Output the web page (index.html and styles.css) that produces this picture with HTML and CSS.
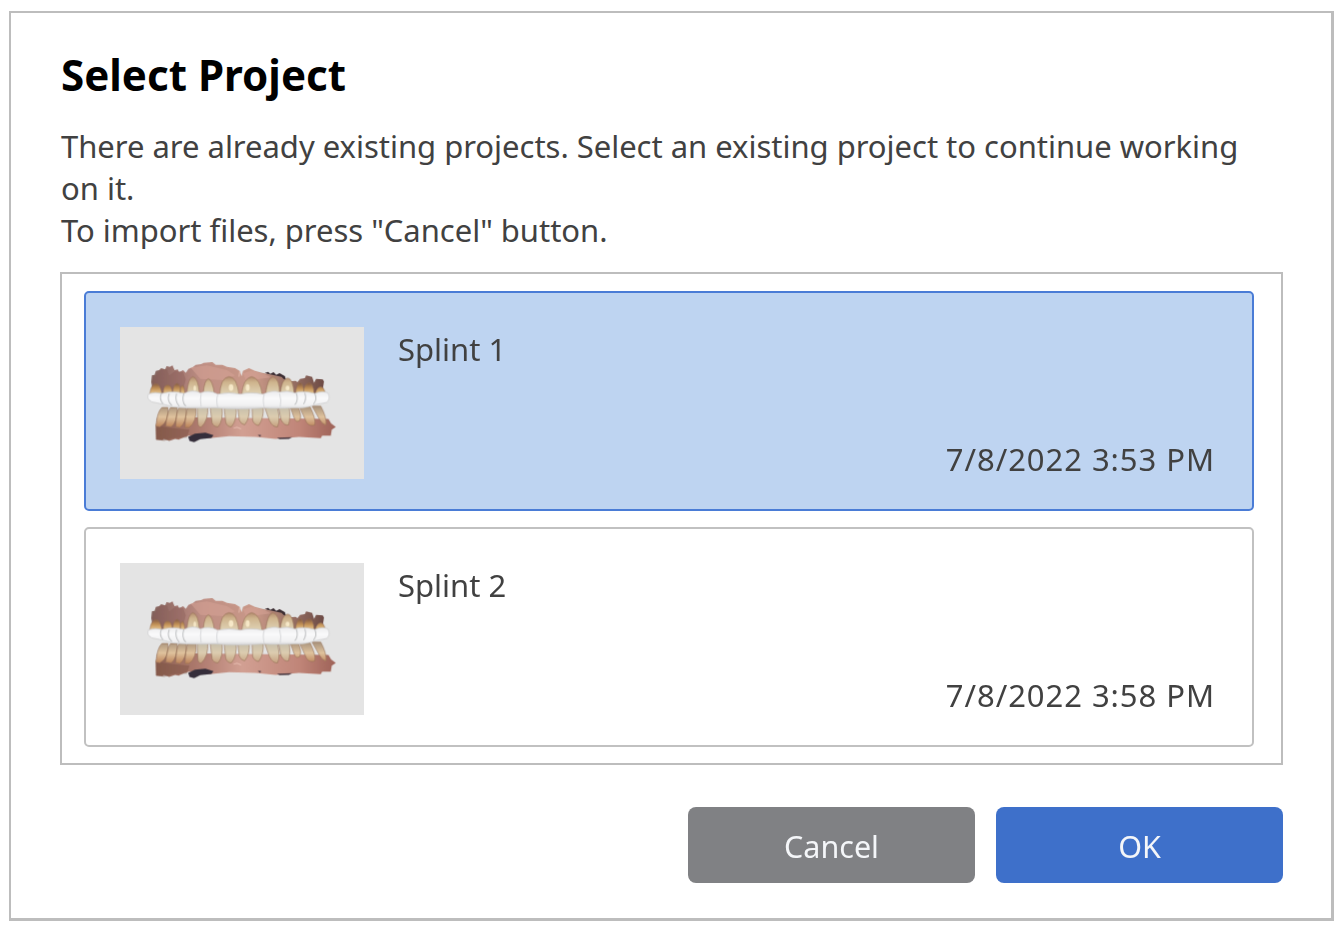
FILE: index.html
```html
<!DOCTYPE html>
<html lang="en">
<head>
<meta charset="utf-8">
<title>Select Project</title>
<link rel="stylesheet" href="styles.css">
</head>
<body>
<svg class="defs" aria-hidden="true">
  <defs>
    <linearGradient id="upperTooth" x1="0" y1="0" x2="0" y2="1"><stop offset="0" stop-color="#b58d70"/><stop offset=".3" stop-color="#cfb58e"/><stop offset="1" stop-color="#e2d6b9"/></linearGradient>
    <linearGradient id="backTooth" x1="0" y1="0" x2="0" y2="1"><stop offset="0" stop-color="#7d5340"/><stop offset=".5" stop-color="#c39258"/><stop offset="1" stop-color="#ebcd98"/></linearGradient>
    <linearGradient id="lowerTooth" x1="0" y1="0" x2="0" y2="1"><stop offset="0" stop-color="#c4bdab"/><stop offset=".5" stop-color="#dccdb0"/><stop offset="1" stop-color="#c5a07e"/></linearGradient>
    <linearGradient id="lowerBack" x1="0" y1="0" x2="0" y2="1"><stop offset="0" stop-color="#a8937c"/><stop offset=".5" stop-color="#dfc29d"/><stop offset="1" stop-color="#bb8158"/></linearGradient>
    <linearGradient id="upperGum" x1="0" y1="0" x2="1" y2="0"><stop offset="0" stop-color="#80605a"/><stop offset=".15" stop-color="#a37871"/><stop offset=".3" stop-color="#bf8f84"/><stop offset=".6" stop-color="#c99888"/><stop offset=".78" stop-color="#a0776a"/><stop offset="1" stop-color="#6d4b45"/></linearGradient>
    <linearGradient id="lowerGum" x1="0" y1="0" x2="1" y2="0"><stop offset="0" stop-color="#8c6052"/><stop offset=".25" stop-color="#b07c70"/><stop offset=".48" stop-color="#d2a093"/><stop offset=".8" stop-color="#c08578"/><stop offset="1" stop-color="#9e6258"/></linearGradient>
    <linearGradient id="splint" x1="0" y1="0" x2="0" y2="1"><stop offset="0" stop-color="#ebebed"/><stop offset=".4" stop-color="#fafafb"/><stop offset=".8" stop-color="#f1f1f2"/><stop offset="1" stop-color="#d6d6d7"/></linearGradient>
    <filter id="soft" x="-5%" y="-5%" width="110%" height="110%"><feGaussianBlur stdDeviation=".55"/></filter>
    <symbol id="scan" viewBox="28 21 734 455" preserveAspectRatio="none">
      <g filter="url(#soft)">
        <path fill="#3b2d32" d="M464 158l10-3 6 6 10-5 8 8 10-5 16 9 4 12-30-4z"/>
        <path fill="url(#upperGum)" d="M122 186l2-20 8-2 4-12 10-2 6-6 12 4 4-10 10 2 8-4 6 14 10-2 4 8 12-6 8 8 8-12 12-4 10-8 16-2 8-4 26-2 10 8 20 0 14 6 24 4 14 8 6 16 4-16 18-8 18 8 22 6 20 4 38 8 14 14 28-2 6 4 8-10 14-2 4-8 18 4 6 18 6-12 20 2 4 6-4 22-6 30H132z"/>
        <path fill="#8a5d57" opacity=".4" d="M124 186l24-36 20-4 8 20 18-14 24 4 8 22-8 30h-90z"/>
        <path fill="#d5a295" opacity=".55" d="M240 142l50-6 60 14 24 16-34 14-70-4zM398 160l24-8 40 10 20 10-44 6-28 10z"/>
        <path fill="url(#lowerGum)" d="M140 290l-5 30 1 38 20 2 4-4 16 6 18-6 10 2 18-8 14-4 60 8 60-6 80 2 60 6 70-6 66 4 4-8 26 0 3-18 12-8-14-10-8-14z"/>
        <path fill="#7d5143" opacity=".45" d="M137 316l34 6 42 4 24 2-8 24-46 2-22 8-24-4z"/>
        <path fill="#352e3b" d="M233 350l20-10 32-3 24 8-6 8-34 4-18 9-14-4z"/>
        <path fill="#4b3941" d="M500 352l46-1-10 5-28 1zM442 344l10 0-2 6z"/>
        <g stroke="#957058" stroke-opacity=".75" stroke-width="2.4">
          <path fill="url(#backTooth)" d="M118 222q2-26 16-32 14-2 20 30zM158 222q0-26 12-28 14 0 16 28zM187 222q0-30 12-32 12 0 12 32zM208 222q0-24 8-26 6 2 7 26zM556 222q2-32 14-34 10 0 12 34zM580 222q0-32 16-34 14 0 16 34zM616 222q2-20 16-22 10 2 14 22z"/>
          <path fill="url(#upperTooth)" d="M229 222q4-50 18-52 16 2 20 52zM278 222q4-44 16-46 12 4 18 46zM328 226q2-54 28-56 24 0 30 56zM394 226q4-52 30-56 26 4 32 56zM466 222q6-50 22-52 20 4 20 52zM510 222q4-46 22-48 16 0 20 48z"/>
          <path fill="url(#lowerBack)" d="M136 318q4-44 18-56h18q4 44-24 58zM166 318q2-40 14-56h20q0 46-18 58zM196 320q0-46 10-58h22q0 48-20 60zM224 322q0-42 8-60h24q4 42-20 60zM540 260h24q12 26 4 42-10 6-14-4zM568 260h32q18 38 14 54-14 6-24-6zM606 258h26q18 34 16 56-10 0-18-14z"/>
          <path fill="url(#lowerTooth)" d="M260 258h32q2 44-20 63-10 0-10-16zM299 258h36q4 44-12 62-14 0-18-12zM341 258h37q2 42-15 62-13 0-17-14zM382 258h35q2 36-14 56-12-2-16-14zM425 258h34q2 36-14 58-14-2-18-16zM462 258h38q12 38 2 62-14 2-24-18zM504 258h33q4 36-2 56-12 4-22-14z"/>
        </g>
        <g fill="#fff3d3" opacity=".8"><ellipse cx="362" cy="202" rx="7" ry="10"/><ellipse cx="412" cy="202" rx="6" ry="10"/><ellipse cx="253" cy="205" rx="4" ry="9"/><ellipse cx="532" cy="204" rx="6" ry="7"/></g>
        <path fill="url(#splint)" stroke="#c9c9ca" stroke-width="2" d="M114 221q20-7 40-1 34-10 66 0 26-14 50-2 28-10 52 4 34-8 68 0 30-8 68 0 30-14 50-6 24-6 46 2 24-8 60 2 24-10 40-1 8 19-5 28l-37 7q-24 11-60 9-60 3-90 0-80 6-150 0-50 2-90 0-36 0-60-10l-38-8q-18-9-10-24z"/>
        <path fill="none" stroke="#aeb0b2" stroke-width="3" opacity=".8" d="M153 218q-8 20 4 32M176 220q-8 22 8 36M198 220q-6 22 8 38M220 220q-8 24 6 38M558 218q8 22-4 36M584 218q6 20-4 34M614 220q8 18-4 32"/>
        <path fill="none" stroke="#d0d1d3" stroke-width="3" opacity=".8" d="M272 220q-4 18 0 40M322 224q-6 16 0 38M462 222q-6 18 0 40M508 220q6 20 2 40"/>
        <path stroke="#f0c7bb" stroke-width="3" opacity=".7" fill="none" d="M370 324l10-3 12 5M388 154l-2 16"/>
      </g>
    </symbol>
  </defs>
</svg>
<main class="dialog">
  <h1 class="title">Select Project</h1>
  <p class="message">There are already existing projects. Select an existing project to continue working on it.<br>To import files, press "Cancel" button.</p>
  <div class="projects">
    <article class="project selected">
      <svg class="thumb"><use href="#scan"/></svg>
      <h2 class="name">Splint 1</h2>
      <time class="date">7/8/2022 3:53 PM</time>
    </article>
    <article class="project">
      <svg class="thumb"><use href="#scan"/></svg>
      <h2 class="name">Splint 2</h2>
      <time class="date">7/8/2022 3:58 PM</time>
    </article>
  </div>
  <div class="actions">
    <button class="button cancel">Cancel</button>
    <button class="button ok">OK</button>
  </div>
</main>
</body>
</html>
```
FILE: styles.css
```css
* { box-sizing: border-box; }
body {
  margin: 0;
  padding: 11px 6px 5px 9px;
  height: 926px;
  overflow: hidden;
  background: #fff;
  color: #414141;
  font: 31px/42px "Noto Sans", sans-serif;
}
.defs { display: block; width: 0; height: 0; }
.dialog {
  height: 910px;
  padding: 34px 48px 0 50px;
  border: 2px solid #bdbdbd;
  border-right-width: 3px;
  border-bottom-width: 3px;
}
.title {
  margin: 0;
  color: #000;
  font-size: 42.1px;
  line-height: 56px;
}
.message { margin: 22px 0 21px; letter-spacing: -.02px; font-variant-ligatures: common-ligatures; }
.projects {
  display: flex;
  flex-direction: column;
  gap: 16px;
  width: 1223px;
  height: 493px;
  margin-left: -1px;
  padding: 17px 27px 0 22px;
  border: 2px solid #bdbdbd;
}
.project {
  display: flex;
  flex: none;
  height: 220px;
  padding: 34px 37px 29px 34px;
  border: 2px solid #c1c1c1;
  border-radius: 5px;
}
.project.selected { background: #bed4f1; border-color: #4a7cd6; }
.thumb { width: 244px; height: 152px; background: #e4e4e4; }
.name { margin: 1px 0 0 34px; font-size: 31px; font-weight: 400; }
.date { margin-left: auto; align-self: flex-end; letter-spacing: .95px; }
.actions { display: flex; justify-content: flex-end; gap: 21px; margin-top: 42px; }
.button {
  width: 287px;
  height: 76px;
  padding: 2px 0 0;
  border: 0;
  border-radius: 8px;
  color: #f4f6f9;
  font: 30.5px/42px "Noto Sans", sans-serif;
}
.cancel { background: #808184; }
.ok { background: #3e70ca; }
```
